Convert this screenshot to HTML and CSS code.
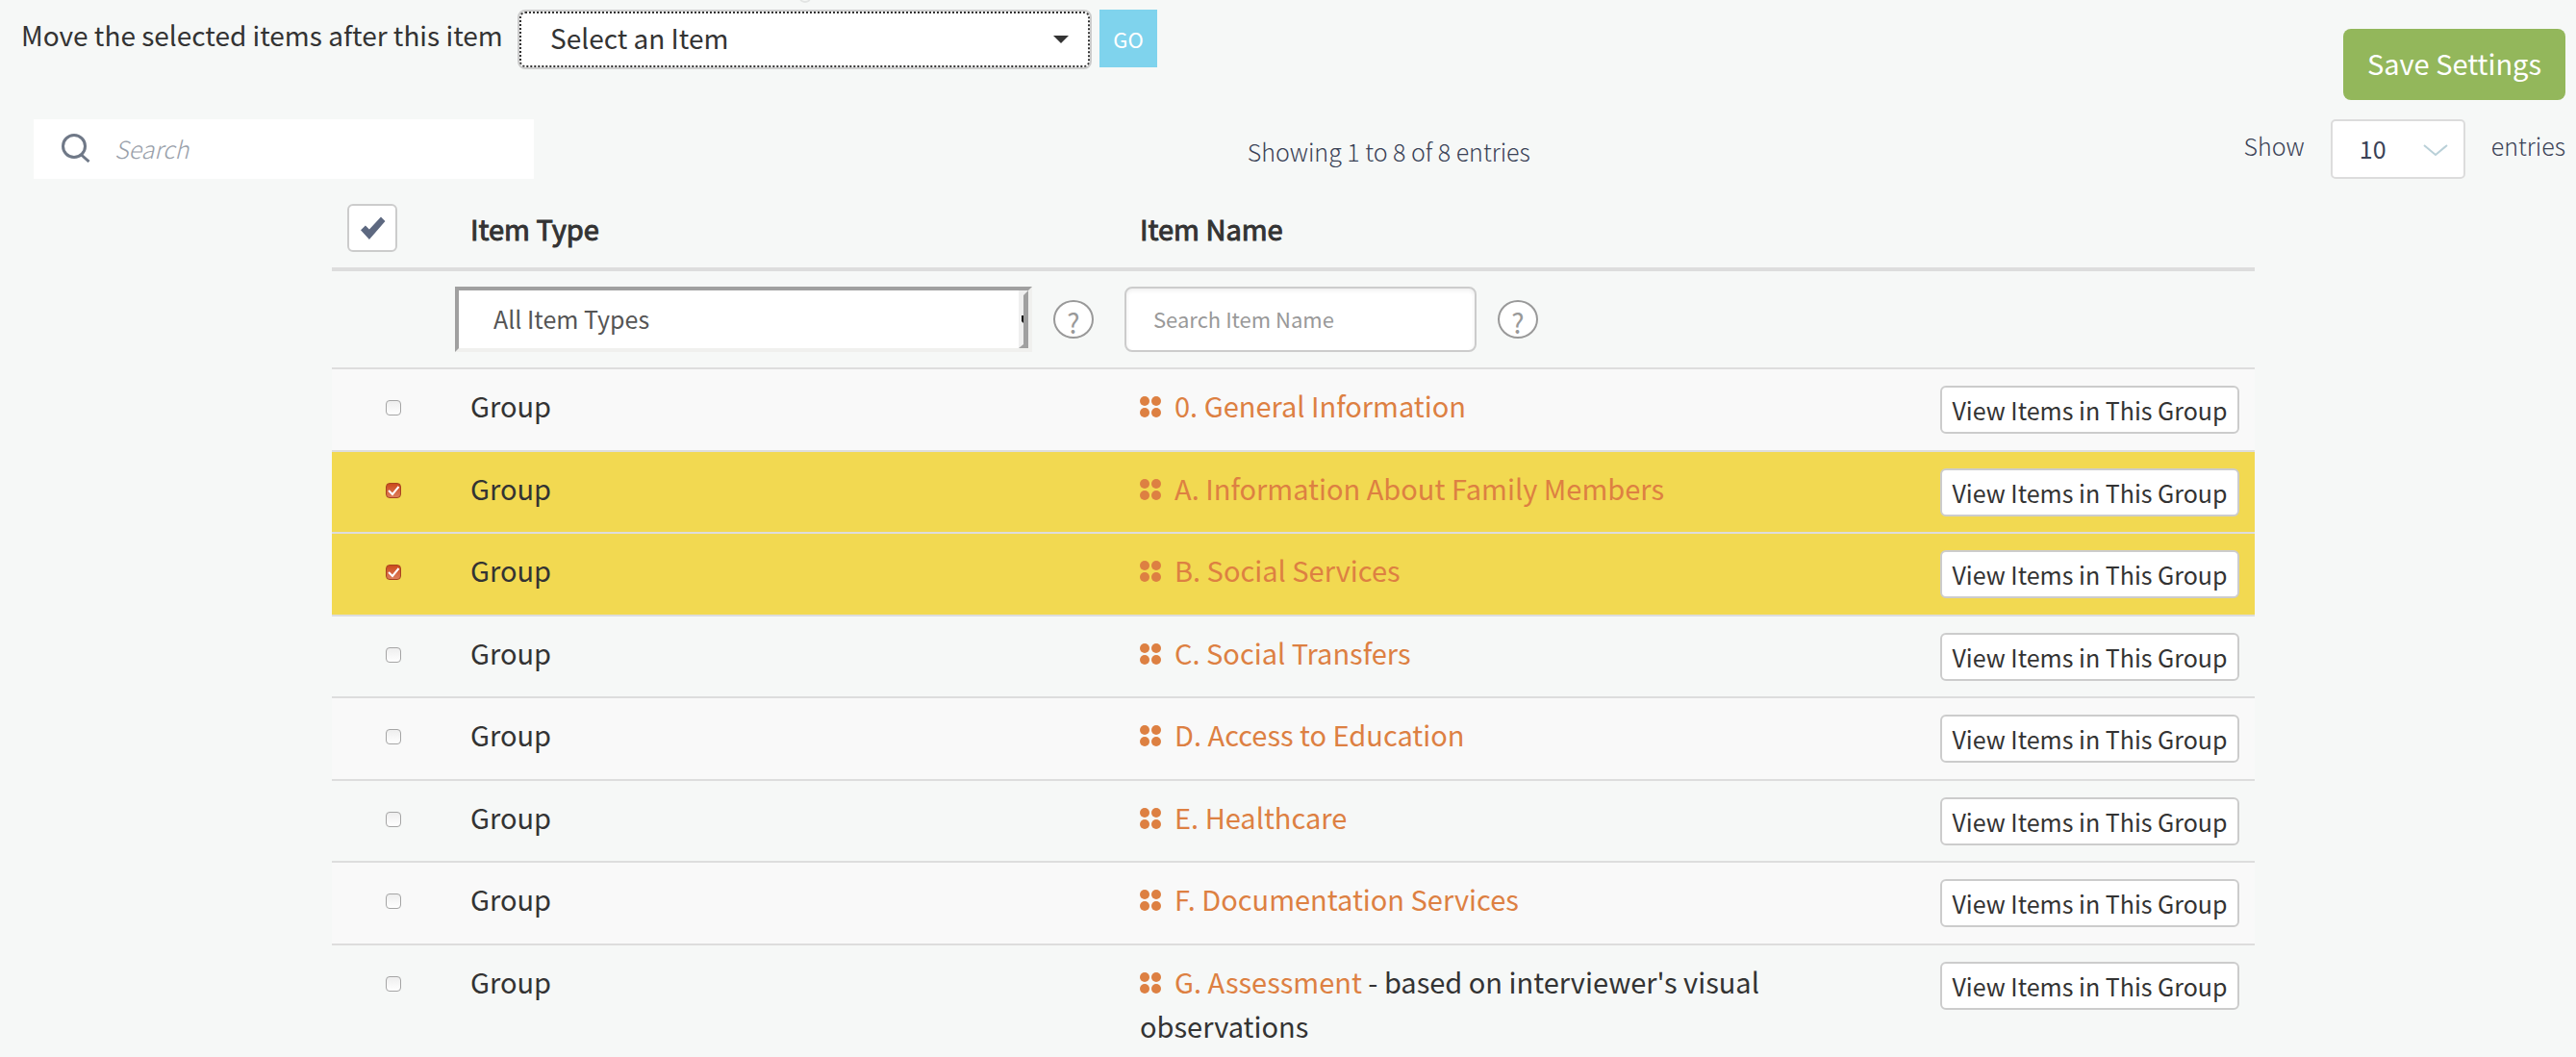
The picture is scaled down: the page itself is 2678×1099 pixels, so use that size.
FILE: index.html
```html
<!DOCTYPE html>
<html lang="en">
<head>
<meta charset="utf-8">
<title>Items</title>
<link rel="stylesheet" href="styles.css">
</head>
<body>
<svg class="sprite" aria-hidden="true">
  <symbol id="dots" viewBox="0 0 22 22"><circle cx="5" cy="5" r="5"/><circle cx="17" cy="5" r="5"/><circle cx="5" cy="17" r="5"/><circle cx="17" cy="17" r="5"/></symbol>
</svg>
<span class="top-mark" aria-hidden="true"></span>
<header class="toolbar">
  <div class="move">
    <label for="move-target">Move the selected items after this item</label>
    <select id="move-target" class="move-select"><option>Select an Item</option></select>
    <button type="button" class="go">GO</button>
  </div>
  <button type="button" class="save">Save Settings</button>
</header>

<div class="controls">
  <label class="search">
    <svg class="search-icon" viewBox="0 0 30 30" aria-hidden="true"><circle cx="13" cy="13" r="11.5"/><path d="M20 21.500L28.500 29"/></svg>
    <input type="search" placeholder="Search" aria-label="Search">
  </label>
  <p class="info">Showing 1 to 8 of 8 entries</p>
  <div class="length">
    <label for="length">Show</label>
    <select id="length" class="length-select"><option>10</option></select>
    <span>entries</span>
  </div>
</div>

<main class="items">
<table>
  <colgroup><col class="col-check"><col class="col-type"><col class="col-name"><col class="col-action"></colgroup>
  <thead>
    <tr class="head">
      <th><button type="button" class="check-all" aria-label="Select all"><svg viewBox="0 0 30 28" aria-hidden="true"><path d="M1 16L6.500 10.500L11 15L24.500 0.500L29.500 5.500L11 27Z"/></svg></button></th>
      <th scope="col">Item Type</th>
      <th scope="col">Item Name</th>
      <th></th>
    </tr>
    <tr class="filters">
      <td></td>
      <td>
        <div class="filter">
          <div class="type-box">
            <select class="type-select" aria-label="Item type"><option>All Item Types</option></select>
            <svg class="type-edge" viewBox="0 0 10 60" aria-hidden="true"><path fill="#efefef" d="M0 0H10V60H0z"/><path fill="#a0a0a0" d="M5 5L10 0V60H0L5 56z"/><path fill="#111" d="M3 26H5V34L3 32z"/></svg>
          </div>
          <button type="button" class="help" aria-label="Help on item type">?</button>
        </div>
      </td>
      <td>
        <div class="filter">
          <input class="name-input" type="text" placeholder="Search Item Name" aria-label="Search Item Name">
          <button type="button" class="help" aria-label="Help on item name">?</button>
        </div>
      </td>
      <td></td>
    </tr>
  </thead>
  <tbody>
    <tr>
      <td class="tick"><input type="checkbox" aria-label="Select group 0"></td>
      <td>Group</td>
      <td><svg class="dots" aria-hidden="true"><use href="#dots"/></svg><a href="#g0">0. General Information</a></td>
      <td class="action"><button type="button" class="view">View Items in This Group</button></td>
    </tr>
    <tr class="selected">
      <td class="tick"><input type="checkbox" checked aria-label="Select group A"></td>
      <td>Group</td>
      <td><svg class="dots" aria-hidden="true"><use href="#dots"/></svg><a href="#ga">A. Information About Family Members</a></td>
      <td class="action"><button type="button" class="view">View Items in This Group</button></td>
    </tr>
    <tr class="selected">
      <td class="tick"><input type="checkbox" checked aria-label="Select group B"></td>
      <td>Group</td>
      <td><svg class="dots" aria-hidden="true"><use href="#dots"/></svg><a href="#gb">B. Social Services</a></td>
      <td class="action"><button type="button" class="view">View Items in This Group</button></td>
    </tr>
    <tr>
      <td class="tick"><input type="checkbox" aria-label="Select group C"></td>
      <td>Group</td>
      <td><svg class="dots" aria-hidden="true"><use href="#dots"/></svg><a href="#gc">C. Social Transfers</a></td>
      <td class="action"><button type="button" class="view">View Items in This Group</button></td>
    </tr>
    <tr>
      <td class="tick"><input type="checkbox" aria-label="Select group D"></td>
      <td>Group</td>
      <td><svg class="dots" aria-hidden="true"><use href="#dots"/></svg><a href="#gd">D. Access to Education</a></td>
      <td class="action"><button type="button" class="view">View Items in This Group</button></td>
    </tr>
    <tr>
      <td class="tick"><input type="checkbox" aria-label="Select group E"></td>
      <td>Group</td>
      <td><svg class="dots" aria-hidden="true"><use href="#dots"/></svg><a href="#ge">E. Healthcare</a></td>
      <td class="action"><button type="button" class="view">View Items in This Group</button></td>
    </tr>
    <tr>
      <td class="tick"><input type="checkbox" aria-label="Select group F"></td>
      <td>Group</td>
      <td><svg class="dots" aria-hidden="true"><use href="#dots"/></svg><a href="#gf">F. Documentation Services</a></td>
      <td class="action"><button type="button" class="view">View Items in This Group</button></td>
    </tr>
    <tr>
      <td class="tick"><input type="checkbox" aria-label="Select group G"></td>
      <td>Group</td>
      <td><svg class="dots" aria-hidden="true"><use href="#dots"/></svg><a href="#gg">G. Assessment</a> - based on interviewer's visual observations</td>
      <td class="action"><button type="button" class="view">View Items in This Group</button></td>
    </tr>
  </tbody>
</table>
</main>
</body>
</html>
```

FILE: styles.css
```css
* { box-sizing: border-box; }

body {
  margin: 0;
  background: #f6f8f7;
  color: #333;
  font-family: "Noto Sans CJK SC", "Noto Sans", sans-serif;
  font-size: 29px;
  line-height: 46px;
  overflow-x: hidden;
}

button, input, select { font: inherit; color: inherit; margin: 0; padding: 0; }
select { appearance: none; }
.sprite { display: none; }

.top-mark {
  position: absolute;
  top: -7px;
  left: 831px;
  width: 12px;
  height: 10px;
  border: 2px solid #e2e4e3;
  border-radius: 50%;
}

/* Toolbar */
.toolbar {
  display: flex;
  justify-content: space-between;
  align-items: flex-start;
  padding: 10px 11px 20px 22px;
}
.move { display: flex; align-items: flex-start; gap: 8px; font-size: 28px; }
.move label { min-width: 508px; padding-top: 3px; }
.move-select {
  width: 597px;
  height: 62px;
  padding: 0 32px 4px;
  border: 2px solid #ccc;
  border-radius: 8px;
  outline: 2px dotted #333;
  outline-offset: -4px;
  background: #fff url("data:image/svg+xml,%3Csvg xmlns='http://www.w3.org/2000/svg' width='16' height='8'%3E%3Cpath fill='%23333' d='M0 0h16L8 8z'/%3E%3C/svg%3E") no-repeat right 22px top 25px;
}
.go {
  width: 60px;
  height: 60px;
  border: 0;
  background: #7fd3ed;
  color: #fff;
  font-size: 22px;
}
.save {
  height: 74px;
  width: 231px;
  margin-top: 20px;
  padding-bottom: 4px;
  border: 0;
  border-radius: 8px;
  background: #93b75b;
  color: #fff;
}

/* Search, entry count and page length */
.controls {
  display: flex;
  height: 62px;
  padding: 0 11px 0 35px;
  font-size: 25px;
  font-weight: 300;
  color: #3a4256;
}
.search {
  display: flex;
  align-items: center;
  gap: 25px;
  width: 520px;
  padding: 0 0 2px 29px;
  background: #fff;
}
.search-icon {
  width: 30px;
  height: 30px;
  fill: none;
  stroke: #6f7887;
  stroke-width: 3;
}
.search input { flex: 1; min-width: 0; border: 0; outline: 0; background: none; }
.search input::placeholder { color: #99a0aa; font-style: italic; opacity: 1; }
.info { flex: 1; margin: 0; padding-top: 10px; text-align: center; }
.length { display: flex; align-items: flex-start; gap: 27px; }
.length label, .length span { padding-top: 4px; }
.length-select {
  width: 140px;
  height: 62px;
  padding: 0 28px 2px;
  border: 2px solid #dcdcdc;
  border-radius: 5px;
  font-weight: 400;
  background: #fff url("data:image/svg+xml,%3Csvg xmlns='http://www.w3.org/2000/svg' width='26' height='13'%3E%3Cpath fill='none' stroke='%23b9d0d8' stroke-width='2' d='M1 1l12 10L25 1'/%3E%3C/svg%3E") no-repeat right 16px top 24px;
}

/* Items table */
.items { margin: 10px 334px 0 345px; }
table { width: 100%; table-layout: fixed; border-collapse: separate; border-spacing: 0; }
.col-check { width: 128px; }
.col-type { width: 696px; }
.col-action { width: 343px; }
th {
  height: 86px;
  padding: 0 16px;
  border-bottom: 4px solid #ddd;
  text-align: left;
  font-weight: 400;
  -webkit-text-stroke: 1px #333;
}
.check-all {
  display: flex;
  align-items: center;
  justify-content: center;
  width: 52px;
  height: 50px;
  border: 2px solid #ccc;
  border-radius: 6px;
  background: #fff;
}
.check-all svg { width: 29px; height: 25px; fill: #5d6880; }

.filters td { height: 100px; padding: 0; }
.filter { display: flex; align-items: center; gap: 22px; }
.type-box { position: relative; width: 600px; height: 68px; }
.type-select {
  width: 100%;
  height: 100%;
  padding: 0 36px 2px;
  border: 4px solid;
  border-color: #a0a0a0 #f0f0ee #f0f0ee #a0a0a0;
  background: #fff;
  color: #555;
  font-size: 25px;
}
.type-edge { position: absolute; top: 4px; right: 4px; width: 10px; height: 60px; pointer-events: none; }
.name-input {
  width: 366px;
  height: 68px;
  padding: 0 28px 2px;
  border: 2px solid #ccc;
  border-radius: 8px;
  background: #fff;
  box-shadow: inset 0 2px 4px #0001;
  font-size: 22px;
}
.name-input::placeholder { color: #999; opacity: 1; }
.help {
  width: 42px;
  height: 40px;
  padding-top: 6px;
  border: 2px solid #999;
  border-radius: 50%;
  background: #fff;
  color: #999;
  font-size: 28px;
  line-height: 30px;
}

tbody td { height: 85px; padding: 14px 16px 0; border-top: 2px solid #ddd; vertical-align: top; }
tbody tr:nth-child(odd) td { height: 86px; background: #f9f9f9; }
tbody tr.selected td { background: #f2d951; }
tbody .tick { padding: 32px 16px 0 56px; line-height: 0; }
tbody .action { padding: 17px 16px 0; line-height: 0; text-align: right; }
.tick input {
  appearance: none;
  width: 16px;
  height: 16px;
  border: 1px solid #a5a5a5;
  border-radius: 4px;
  background: linear-gradient(#eee, #fff);
}
.tick input:checked {
  border-color: #a8431f;
  background: url("data:image/svg+xml,%3Csvg xmlns='http://www.w3.org/2000/svg' width='14' height='14'%3E%3Cpath fill='none' stroke='%23fff' stroke-width='2' d='M2 7l4 4 6.500-8'/%3E%3C/svg%3E") center no-repeat, linear-gradient(#cc4a1c, #dd7d5b);
}
.dots { display: inline-block; width: 22px; height: 22px; margin-right: 14px; fill: #dd8042; }
a { color: #dd8042; text-decoration: none; }
.view {
  width: 311px;
  height: 50px;
  border: 2px solid #ccc;
  border-radius: 6px;
  background: #fff;
  font-size: 25px;
  line-height: 40px;
  white-space: nowrap;
}
```
